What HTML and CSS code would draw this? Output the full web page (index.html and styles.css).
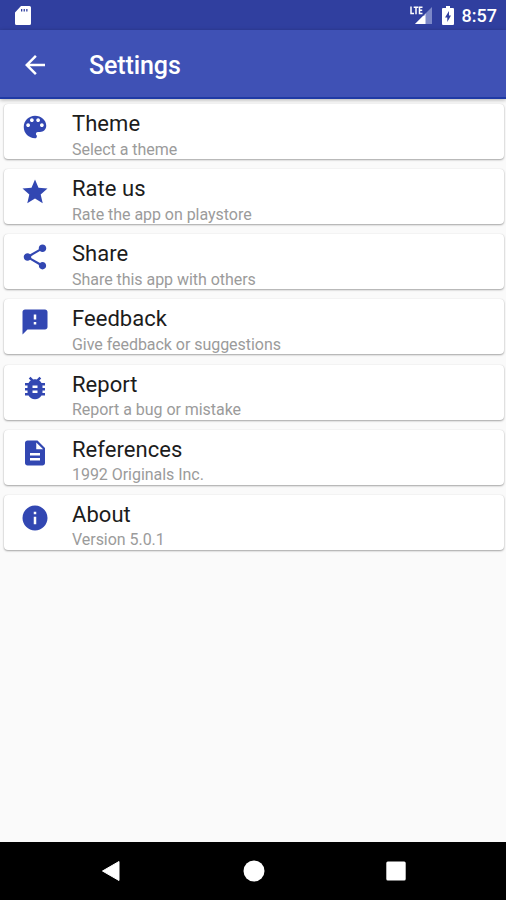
FILE: index.html
```html
<!DOCTYPE html>
<html lang="en">
<head>
<meta charset="utf-8">
<title>Settings</title>
<link rel="stylesheet" href="styles.css">
</head>
<body>
<div class="status">
  <svg class="sd" width="16" height="19" viewBox="0 0 16 19"><path fill="#fff" fill-rule="evenodd" d="M6 0h8.500a1.500 1.500 0 0 1 1.500 1.500v16a1.500 1.500 0 0 1-1.500 1.500h-13a1.500 1.500 0 0 1-1.500-1.500V6.500zM6 3v2.500h1.300V3zM8.600 3v2.500h1.300V3zM11.200 3v2.500h1.300V3z"/></svg>
  <div class="status-right">
    <svg class="signal" width="22" height="19" viewBox="0 0 22 19"><path fill="#7c88c8" d="M22 1v17H5z"/><path fill="#fff" d="M15.500 7.500V18H5z"/><path fill="#303f9f" d="M0 0h14.500v9.500H0z"/><path fill="none" stroke="#fff" stroke-width="1.500" d="M1 .5v7h3M3.700 1.200h4.600M6 1.200v7M12.500 1.200H9.500v6.300h3M9.500 4.300h2.700"/></svg>
    <svg class="battery" width="12" height="19" viewBox="0 0 12 19"><path fill="#fff" d="M4 0h4v2h3a1 1 0 0 1 1 1v15a1 1 0 0 1-1 1H1a1 1 0 0 1-1-1V3a1 1 0 0 1 1-1h3z"/><path fill="#303f9f" d="M7 5 3 11.500h2.300V16L9 9.500H7z"/></svg>
    <span>8:57</span>
  </div>
</div>
<header class="bar">
  <svg class="back" width="30" height="30" viewBox="0 0 24 24"><path fill="#fff" d="M20 11H7.830l5.590-5.590L12 4l-8 8 8 8 1.410-1.410L7.830 13H20v-2z"/></svg>
  <h1>Settings</h1>
</header>
<main class="list">
  <div class="card">
    <svg class="icon" viewBox="0 0 24 24"><path d="M12 3c-4.970 0-9 4.030-9 9s4.030 9 9 9c.83 0 1.500-.67 1.500-1.500 0-.39-.15-.74-.39-1.010-.23-.26-.38-.61-.38-.99 0-.83.67-1.500 1.500-1.500H16c2.760 0 5-2.240 5-5 0-4.420-4.030-8-9-8zm-5.500 9c-.83 0-1.500-.67-1.500-1.500S5.670 9 6.500 9 8 9.670 8 10.500 7.330 12 6.500 12zm3-4C8.670 8 8 7.330 8 6.500S8.670 5 9.500 5s1.500.67 1.500 1.500S10.330 8 9.500 8zm5 0c-.83 0-1.500-.67-1.500-1.500S13.670 5 14.500 5s1.500.67 1.500 1.500S15.330 8 14.500 8zm3 4c-.83 0-1.500-.67-1.500-1.500S16.670 9 17.500 9s1.500.67 1.500 1.500-.67 1.500-1.500 1.500z"/></svg>
    <div class="text"><div class="title">Theme</div><div class="sub">Select a theme</div></div>
  </div>
  <div class="card">
    <svg class="icon" viewBox="0 0 24 24"><path d="M12 17.270 18.180 21l-1.640-7.030L22 9.240l-7.190-.61L12 2 9.190 8.630 2 9.240l5.460 4.730L5.820 21z"/></svg>
    <div class="text"><div class="title">Rate us</div><div class="sub">Rate the app on playstore</div></div>
  </div>
  <div class="card">
    <svg class="icon" viewBox="0 0 24 24"><path d="M18 16.080c-.76 0-1.440.3-1.960.77L8.910 12.700c.05-.23.09-.46.09-.7s-.04-.47-.09-.7l7.050-4.110c.54.5 1.250.81 2.040.81 1.660 0 3-1.340 3-3s-1.340-3-3-3-3 1.340-3 3c0 .24.04.47.09.7L8.040 9.810C7.500 9.310 6.790 9 6 9c-1.660 0-3 1.340-3 3s1.340 3 3 3c.79 0 1.500-.31 2.040-.81l7.120 4.160c-.05.21-.08.43-.08.65 0 1.610 1.310 2.920 2.920 2.920s2.920-1.310 2.920-2.920-1.310-2.920-2.920-2.920z"/></svg>
    <div class="text"><div class="title">Share</div><div class="sub">Share this app with others</div></div>
  </div>
  <div class="card">
    <svg class="icon" viewBox="0 0 24 24"><path d="M20 2H4c-1.100 0-1.990.9-1.990 2L2 22l4-4h14c1.100 0 2-.9 2-2V4c0-1.100-.9-2-2-2zm-7 12h-2v-2h2v2zm0-4h-2V6h2v4z"/></svg>
    <div class="text"><div class="title">Feedback</div><div class="sub">Give feedback or suggestions</div></div>
  </div>
  <div class="card">
    <svg class="icon" viewBox="0 0 24 24"><path d="M20 8h-2.810c-.45-.78-1.070-1.450-1.820-1.960L17 4.410 15.590 3l-2.170 2.170C12.960 5.060 12.490 5 12 5s-.96.06-1.410.17L8.410 3 7 4.410l1.620 1.630C7.880 6.550 7.260 7.220 6.810 8H4v2h2.090c-.05.33-.09.66-.09 1v1H4v2h2v1c0 .34.04.67.09 1H4v2h2.810c1.040 1.790 2.970 3 5.190 3s4.150-1.210 5.190-3H20v-2h-2.090c.05-.33.09-.66.09-1v-1h2v-2h-2v-1c0-.34-.04-.67-.09-1H20V8zm-6 8h-4v-2h4v2zm0-4h-4v-2h4v2z"/></svg>
    <div class="text"><div class="title">Report</div><div class="sub">Report a bug or mistake</div></div>
  </div>
  <div class="card">
    <svg class="icon" viewBox="0 0 24 24"><path d="M14 2H6c-1.100 0-1.990.9-1.990 2L4 20c0 1.100.89 2 1.990 2H18c1.100 0 2-.9 2-2V8l-6-6zm2 16H8v-2h8v2zm0-4H8v-2h8v2zm-3-5V3.500L18.500 9H13z"/></svg>
    <div class="text"><div class="title">References</div><div class="sub">1992 Originals Inc.</div></div>
  </div>
  <div class="card">
    <svg class="icon" viewBox="0 0 24 24"><path d="M12 2C6.480 2 2 6.480 2 12s4.480 10 10 10 10-4.480 10-10S17.520 2 12 2zm1 15h-2v-6h2v6zm0-8h-2V7h2v2z"/></svg>
    <div class="text"><div class="title">About</div><div class="sub">Version 5.0.1</div></div>
  </div>
</main>
<nav class="nav">
  <svg width="20" height="22" viewBox="0 0 20 22"><path fill="#fff" stroke="#fff" stroke-linejoin="round" d="M1.500 11 18 1.500v19z"/></svg>
  <svg width="22" height="22" viewBox="0 0 22 22"><circle cx="11" cy="11" r="10.500" fill="#fff"/></svg>
  <svg width="20" height="20" viewBox="0 0 20 20"><rect x=".3" y=".5" width="19.400" height="19" rx="1.500" fill="#fff"/></svg>
</nav>
</body>
</html>
```
FILE: styles.css
```css
* { box-sizing: border-box; }
body {
  margin: 0;
  height: 900px;
  display: flex;
  flex-direction: column;
  background: #fafafa;
  font-family: Roboto, sans-serif;
  overflow: hidden;
}
svg { display: block; flex: none; }
.status {
  height: 30px;
  flex: none;
  display: flex;
  justify-content: space-between;
  align-items: center;
  padding: 1px 9px 0 15px;
  background: #303f9f;
  color: #fff;
}
.status-right {
  display: flex;
  align-items: center;
  font-size: 18px;
  font-weight: 500;
  line-height: 28px;
}
.signal { margin-right: 10px; }
.battery { margin-right: 8px; }
.bar {
  height: 69px;
  flex: none;
  display: flex;
  align-items: center;
  padding: 2px 0 0 20px;
  background: #3f51b5;
  border-bottom: 2px solid #1f3aa5;
  box-shadow: 0 1px 4px rgba(0, 0, 0, .3);
  color: #fff;
}
h1 {
  margin: 2px 0 0 39px;
  font-size: 25px;
  line-height: 30px;
  font-weight: 500;
  letter-spacing: -.1px;
}
.list {
  flex: 1;
  padding: 5px 2.500px 0 4px;
  display: flex;
  flex-direction: column;
  gap: 10.150px;
}
.card {
  height: 55px;
  flex: none;
  display: flex;
  padding: 8px 0 0 16px;
  background: #fff;
  border-radius: 4px;
  box-shadow: 0 1px 2px rgba(0, 0, 0, .34), 0 0 1px rgba(0, 0, 0, .12);
}
.icon {
  width: 30px;
  height: 30px;
  fill: #3247b2;
}
.text { margin: -1px 0 0 22px; white-space: nowrap; }
.title {
  font-size: 22px;
  line-height: 26px;
  letter-spacing: .05px;
  color: #1c1c1c;
}
.sub {
  margin-top: 2.500px;
  font-size: 16px;
  line-height: 20px;
  letter-spacing: -.04px;
  color: #9b9b9b;
}
.nav {
  height: 58px;
  flex: none;
  display: flex;
  align-items: center;
  justify-content: space-between;
  padding: 0 100px 0 101px;
  background: #000;
}
```
